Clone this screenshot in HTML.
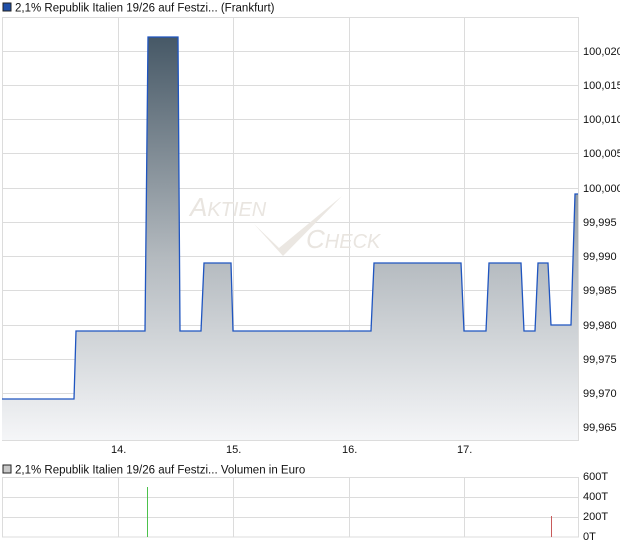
<!DOCTYPE html>
<html><head><meta charset="utf-8"><style>
html,body{margin:0;padding:0;background:#fff;width:620px;height:546px;overflow:hidden}
svg{display:block;font-family:"Liberation Sans",sans-serif}
</style></head><body>
<svg width="620" height="546" viewBox="0 0 620 546">
<defs>
<linearGradient id="g" gradientUnits="userSpaceOnUse" x1="0" y1="37" x2="0" y2="440">
<stop offset="0" stop-color="#465866"/>
<stop offset="0.55" stop-color="#b4babf"/>
<stop offset="1" stop-color="#f5f6f8"/>
</linearGradient>
</defs>
<rect x="3" y="3" width="8" height="8" fill="#1f4fa8" stroke="#222" stroke-width="1"/>
<text x="15" y="11.5" font-size="11.5" fill="#111">2,1% Republik Italien 19/26 auf Festzi... (Frankfurt)</text>
<g stroke="#dcdcdc" stroke-width="1">
<line x1="118.5" y1="17" x2="118.5" y2="440"/><line x1="233.5" y1="17" x2="233.5" y2="440"/>
<line x1="349.5" y1="17" x2="349.5" y2="440"/><line x1="464.5" y1="17" x2="464.5" y2="440"/>
<line x1="2" y1="51.5" x2="578" y2="51.5"/><line x1="2" y1="85.5" x2="578" y2="85.5"/>
<line x1="2" y1="119.5" x2="578" y2="119.5"/><line x1="2" y1="153.5" x2="578" y2="153.5"/>
<line x1="2" y1="188.5" x2="578" y2="188.5"/><line x1="2" y1="222.5" x2="578" y2="222.5"/>
<line x1="2" y1="256.5" x2="578" y2="256.5"/><line x1="2" y1="290.5" x2="578" y2="290.5"/>
<line x1="2" y1="325.5" x2="578" y2="325.5"/><line x1="2" y1="359.5" x2="578" y2="359.5"/>
<line x1="2" y1="393.5" x2="578" y2="393.5"/><line x1="2" y1="427.5" x2="578" y2="427.5"/>
</g>
<rect x="2.5" y="17.5" width="576" height="423" fill="none" stroke="#dcdcdc"/>
<g fill="#e9e5e0" font-style="italic" font-size="26">
<text x="190" y="216">A<tspan font-size="20">KTIEN</tspan></text>
<text x="306" y="248">C<tspan font-size="20">HECK</tspan></text>
</g>
<path d="M254 224 L279 248 L342 196 L283 256 Z" fill="#ebe7e2"/>
<path d="M2 399 L74 399 L76 331 L145 331 L148 37 L178 37 L180 331 L201 331 L204 263 L231 263 L233 331 L371 331 L374 263 L461 263 L464 331 L486 331 L489 263 L521 263 L524 331 L535 331 L538 263 L548 263 L551 325 L571 325 L575 194 L578 194 L578 440 L2 440 Z" fill="url(#g)"/>
<path d="M2 399 L74 399 L76 331 L145 331 L148 37 L178 37 L180 331 L201 331 L204 263 L231 263 L233 331 L371 331 L374 263 L461 263 L464 331 L486 331 L489 263 L521 263 L524 331 L535 331 L538 263 L548 263 L551 325 L571 325 L575 194 L578 194" fill="none" stroke="#1f55c0" stroke-width="1.3"/>
<g font-size="11" fill="#111">
<text x="583" y="55">100,020</text><text x="583" y="89">100,015</text><text x="583" y="123">100,010</text>
<text x="583" y="157">100,005</text><text x="583" y="192">100,000</text><text x="583" y="226">99,995</text>
<text x="583" y="260">99,990</text><text x="583" y="294">99,985</text><text x="583" y="329">99,980</text>
<text x="583" y="363">99,975</text><text x="583" y="397">99,970</text><text x="583" y="431">99,965</text>
<text x="111" y="453">14.</text><text x="226" y="453">15.</text><text x="342" y="453">16.</text><text x="457" y="453">17.</text>
</g>
<rect x="3" y="465" width="8" height="8" fill="#c8c8c8" stroke="#222"/>
<text x="15" y="473.5" font-size="11.5" fill="#111">2,1% Republik Italien 19/26 auf Festzi... Volumen in Euro</text>
<g stroke="#dcdcdc">
<line x1="118.5" y1="478" x2="118.5" y2="537"/><line x1="233.5" y1="478" x2="233.5" y2="537"/>
<line x1="349.5" y1="478" x2="349.5" y2="537"/><line x1="464.5" y1="478" x2="464.5" y2="537"/>
<line x1="2" y1="497.5" x2="578" y2="497.5"/><line x1="2" y1="517.5" x2="578" y2="517.5"/>
<rect x="2.5" y="477.5" width="576" height="59.5" fill="none"/>
</g>
<line x1="147.5" y1="487" x2="147.5" y2="537" stroke="#4cc24c"/>
<line x1="551.5" y1="516" x2="551.5" y2="537" stroke="#c85a5a"/>
<g font-size="11" fill="#111">
<text x="583" y="480">600T</text><text x="583" y="500">400T</text><text x="583" y="520">200T</text><text x="583" y="540">0T</text>
</g>
</svg>
</body></html>
